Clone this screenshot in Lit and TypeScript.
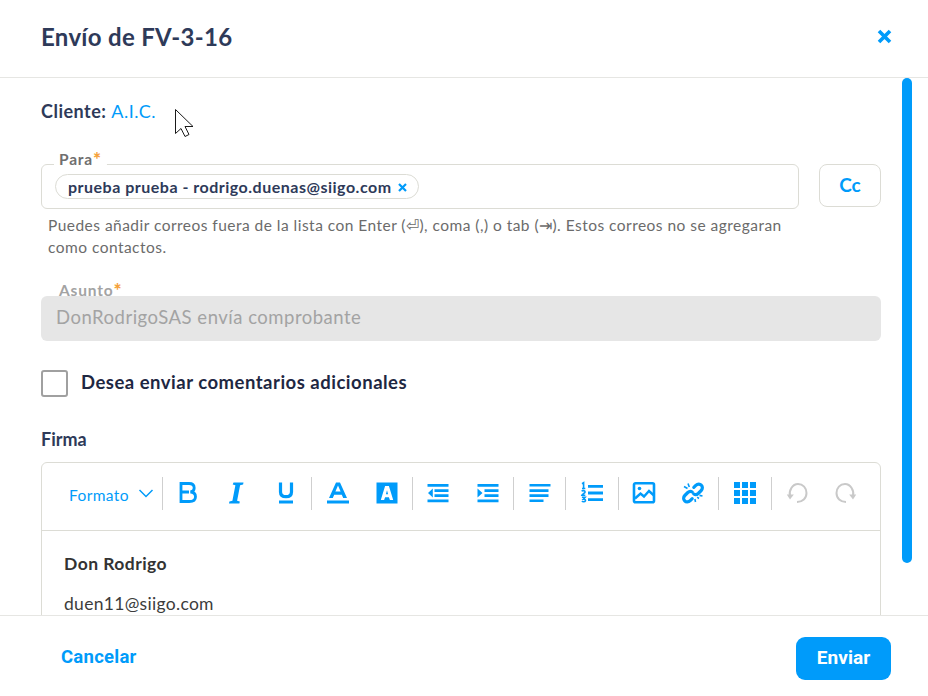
import { LitElement, html, css, svg } from "lit";
import { customElement } from "lit/decorators.js";

const ic = (body: unknown) => html`<svg class="ic" viewBox="0 0 24 24" width="24" height="24" fill="none">${body}</svg>`;

const icons = {
  bold: svg`<path d="M5 2.500h8c3.200 0 5.200 1.600 5.200 4.400 0 2.200-1.500 3.800-3.800 4.100 3 .2 5.100 2 5.100 4.700 0 2.900-2.300 4.800-6.200 4.800H5zM5 11h8" stroke="currentColor" stroke-width="2.800"/>`,
  italic: svg`<path d="M8.500 1.500h10l-.4 2-3 .8-3 15.400 2.700.7-.4 2.100H4l.4-2.100 3-.7 3-15.400-2.700-.8z" fill="currentColor"/>`,
  underline: svg`<path d="M6.500 1.500v9.500c0 3 2 4.700 5.500 4.700s5.500-1.700 5.500-4.700V1.500" stroke="currentColor" stroke-width="3.200"/><rect x="5" y="19.500" width="14" height="3" fill="currentColor"/>`,
  colorA: svg`<path d="M4 17 11 1.500h4L22 17h-3.800l-1.400-3.300H9.200L7.800 17zM10.400 10.500h5.200L13 4.500z" fill="currentColor" fill-rule="evenodd"/><rect x="2" y="19.500" width="22" height="3" fill="currentColor"/>`,
  bgA: svg`<path fill-rule="evenodd" fill="currentColor" d="M1.500 1.500h21v21h-21zM5.800 19h3.300l1-2.800h3.800l1 2.800h3.300L13.900 5H10.100zM10.900 13.300h2.200L12 9.200z"/>`,
  outdent: svg`<path fill="currentColor" d="M1.500 3h21v2.800h-21zM8.500 8.200h14V11h-14zM8.500 13.300h14v2.800h-14zM1.500 18.500h21v2.800h-21zM6.800 7.500v9L2 12z"/>`,
  indent: svg`<path fill="currentColor" d="M1.500 3h21v2.800h-21zM8.500 8.200h14V11h-14zM8.500 13.300h14v2.800h-14zM1.500 18.500h21v2.800h-21zM1.500 7.500v9L6.500 12z"/>`,
  left: svg`<path fill="currentColor" d="M1.500 3h21v2.600h-21zM1.500 8.300h19v2.600h-19zM1.500 13.300h19v2.600h-19zM1.500 18.500h14v2.600h-14z"/>`,
  list: svg`<path fill="currentColor" d="M8 4h15v2.800H8zM8 10.600h15v2.800H8zM8 17.200h15V20H8z"/><path stroke="currentColor" stroke-width="1.600" d="M2 2.800 3.600 1.800v5.700M2 7.500h3.300M1.800 10.300c.5-1 3.300-1 3.300.6 0 1.300-3 2-3.300 3.400h3.500M1.900 16.300h3.200l-1.700 1.900c2-.1 2.300 1 2 1.700-.5 1-2.700 1-3.500.2"/>`,
  image: svg`<rect x="2" y="2.300" width="20" height="19" rx="1.500" stroke="currentColor" stroke-width="2.600"/><circle cx="7.500" cy="7.500" r="1.800" fill="currentColor"/><path d="m3 17.500 5.500-5 3.500 3 5-5.500 5 4.500" stroke="currentColor" stroke-width="2.400"/>`,
  unlink: svg`<path stroke="currentColor" stroke-width="3.200" stroke-linecap="round" d="M12.800 6.300l2-2c1.800-1.800 4.300-1.500 5.500-.2 1.500 1.500 1.400 3.900-.1 5.400l-3 3c-1.400 1.300-3.100 1.400-4.400.5M11.200 17.700l-2 2c-1.800 1.800-4.300 1.500-5.500.2-1.500-1.500-1.400-3.900.1-5.400l3-3c1.400-1.300 3.100-1.400 4.400-.5"/><path stroke="currentColor" stroke-width="1.600" d="M7 2.500 8.300 6M3 5.500 6.500 7.500M18 17.500l-1.800-1.300M21.500 15l-3-.6M14.500 21l-.6-3"/>`,
  table: svg`<path fill="currentColor" d="M1 1h6v6H1zM9 1h6v6H9zM17 1h6v6h-6zM1 9h6v6H1zM9 9h6v6H9zM17 9h6v6h-6zM1 17h6v6H1zM9 17h6v6H9zM17 17h6v6h-6z"/>`,
  undo: svg`<path stroke="currentColor" stroke-width="2" d="M5 15.500C3.500 9.500 7.500 3 13 3c5 0 8.500 4 8.500 9 0 5.500-4 9-9.500 9"/><path fill="currentColor" d="M1.800 13.500h7l-3.800 5z"/>`,
  redo: svg`<path stroke="currentColor" stroke-width="2" d="M19 15.500C20.500 9.500 16.500 3 11 3 6 3 2.500 7 2.500 12c0 5.500 4 9 9.500 9"/><path fill="currentColor" d="M22.200 13.500h-7l3.800 5z"/>`,
};

@customElement("app-root")
export class AppRoot extends LitElement {
  static styles = css`
    :host { display: block; width: 928px; height: 696px; background: #fff; font-family: Lato, "Noto Sans", sans-serif; color: #2e3a59; position: relative; overflow: hidden; }
    .modal { display: flex; flex-direction: column; height: 696px; }
    .head { height: 77px; border-bottom: 1px solid #e6e6e3; display: flex; align-items: center; justify-content: space-between; padding: 0 36px 0 41px; flex: none; }
    h1 { margin: 0; font-size: 24px; font-weight: 700; line-height: 30px; color: #2e3a59; letter-spacing: .3px; position: relative; top: -2px; }
    .close { width: 15px; height: 15px; color: #009bfa; position: relative; top: -2px; display: block; }
    .body { height: 537px; flex: none; overflow: hidden; padding: 0 47px 0 41px; }
    .client { margin-top: 22px; font-size: 18px; line-height: 22px; font-weight: 700; letter-spacing: .5px; }
    .client a { color: #009bfa; font-weight: 400; }
    .para-row { display: flex; gap: 20px; margin-top: 42px; align-items: flex-start; }
    .field { position: relative; }
    .para { flex: 1; height: 45px; box-sizing: border-box; border: 1px solid #dcdcd5; border-radius: 6px; display: flex; align-items: center; padding-left: 13px; }
    .legend { position: absolute; left: 12px; top: -16px; font-size: 15.500px; line-height: 20px; font-weight: 700; letter-spacing: .8px; color: #6f6f6f; background: linear-gradient(#fff 0 0) bottom/100% 5px no-repeat; padding: 0 5px; }
    .legend b { color: #f5a23b; font-size: 19px; line-height: 14px; position: relative; top: 1px; }
    .chip { height: 25px; box-sizing: border-box; border: 1px solid #dcdcd5; border-radius: 13px; display: flex; align-items: center; padding: 0 11px 0 12px; gap: 6px; font-size: 16px; font-weight: 700; letter-spacing: .5px; color: #2e3a59; }
    .chip svg { width: 9px; height: 9px; color: #009bfa; margin-top: 2px; }
    .cc { width: 62px; height: 43px; box-sizing: border-box; border: 1px solid #dcdcd5; border-radius: 8px; display: flex; align-items: center; justify-content: center; color: #009bfa; font-size: 19px; font-weight: 700; padding-bottom: 2px; }
    .help { margin: 5px 0 0 7px; width: 745px; font-size: 15.500px; line-height: 22px; letter-spacing: .47px; color: #6b6b6b; }
    .asunto { margin-top: 38px; height: 45px; background: #e6e6e6; border-radius: 6px; display: flex; align-items: center; padding-left: 15px; font-size: 18.500px; letter-spacing: .5px; color: #a3a3a3; padding-bottom: 3px; box-sizing: border-box; }
    .asunto .legend { left: 13px; top: -16px; color: #a3a3a3; background: none; }
    .check { margin-top: 29px; display: flex; align-items: center; gap: 13px; font-size: 18.500px; font-weight: 700; letter-spacing: .5px; line-height: 23px; color: #1e2742; }
    .check > span:last-child { margin-top: -2px; }
    .box { width: 27px; height: 27px; box-sizing: border-box; border: 2px solid #a0a0a0; border-radius: 3px; }
    .firma { margin-top: 30px; font-size: 18px; line-height: 24px; font-weight: 700; }
    .editor { margin-top: 11px; height: 160px; border: 1px solid #dcdcd5; border-radius: 6px 6px 0 0; }
    .toolbar { height: 61px; padding-bottom: 6px; border-bottom: 1px solid #dcdcd5; display: flex; align-items: center; color: #009bfa; }
    .fmt { width: 120px; box-sizing: border-box; padding-left: 27px; display: flex; align-items: center; gap: 9px; font-size: 15.500px; letter-spacing: .4px; padding-top: 2px; }
    .fmt svg { width: 16px; height: 9px; margin-top: -3px; }
    .sep { width: 1px; height: 33px; background: #cfcfcf; flex: none; }
    .grp { display: flex; align-items: center; }
    .grp > span { flex: 1; display: flex; justify-content: center; }
    .ic { display: block; margin-top: -2px; }
    .g148 { width: 148px; } .g100 { width: 100px; } .g99 { width: 99px; } .g51 { width: 51px; } .g52 { width: 52px; }
    .dis { color: #c9c9c9; }
    .sign { padding: 21px 22px 0; font-size: 17.500px; line-height: 24px; color: #3c3c3c; }
    .sign strong { display: block; font-weight: 700; color: #333; letter-spacing: .45px; }
    .sign div { margin-top: 16px; letter-spacing: .3px; }
    .foot { flex: 1; border-top: 1px solid #e6e6e3; display: flex; align-items: center; justify-content: space-between; padding: 5px 37px 0 61px; font-family: Roboto, sans-serif; }
    .cancel { color: #009bfa; font-size: 18.500px; font-weight: 700; letter-spacing: .25px; margin-top: -3px; }
    .send { width: 95px; height: 43px; box-sizing: border-box; padding-bottom: 2px; background: #009bfa; color: #fff; border-radius: 9px; display: flex; align-items: center; justify-content: center; font-size: 19px; font-weight: 700; letter-spacing: .1px; }
    .thumb { position: absolute; left: 902px; top: 78px; width: 10px; height: 485px; background: #009bfa; border-radius: 5px; }
    .cursor { position: absolute; left: 175px; top: 109px; width: 19px; height: 28px; }
  `;

  render() {
    return html`
      <div class="modal">
        <header class="head">
          <h1>Envío de FV-3-16</h1>
          <svg class="close" viewBox="0 0 15 15"><path d="M2 2l11 11M13 2 2 13" stroke="currentColor" stroke-width="3.600"/></svg>
        </header>
        <main class="body">
          <div class="client">Cliente: <a>A.I.C.</a></div>
          <div class="para-row">
            <div class="field para">
              <span class="legend">Para<b>*</b></span>
              <span class="chip">prueba prueba - rodrigo.duenas@siigo.com
                <svg viewBox="0 0 9 9"><path d="M1 1l7 7M8 1 1 8" stroke="currentColor" stroke-width="2.200"/></svg>
              </span>
            </div>
            <div class="cc">Cc</div>
          </div>
          <p class="help">Puedes añadir correos fuera de la lista con Enter (⏎), coma (,) o tab (⇥). Estos correos no se agregaran como contactos.</p>
          <div class="field asunto"><span class="legend">Asunto<b>*</b></span>DonRodrigoSAS envía comprobante</div>
          <div class="check"><span class="box"></span><span>Desea enviar comentarios adicionales</span></div>
          <div class="firma">Firma</div>
          <div class="editor">
            <div class="toolbar">
              <div class="fmt">Formato <svg viewBox="0 0 16 9"><path d="M1.500 1 8 7.500 14.500 1" stroke="currentColor" stroke-width="1.500" fill="none"/></svg></div>
              <i class="sep"></i>
              <div class="grp g148"><span>${ic(icons.bold)}</span><span>${ic(icons.italic)}</span><span>${ic(icons.underline)}</span></div>
              <i class="sep"></i>
              <div class="grp g100"><span>${ic(icons.colorA)}</span><span>${ic(icons.bgA)}</span></div>
              <i class="sep"></i>
              <div class="grp g100"><span>${ic(icons.outdent)}</span><span>${ic(icons.indent)}</span></div>
              <i class="sep"></i>
              <div class="grp g51"><span>${ic(icons.left)}</span></div>
              <i class="sep"></i>
              <div class="grp g52"><span>${ic(icons.list)}</span></div>
              <i class="sep"></i>
              <div class="grp g99"><span>${ic(icons.image)}</span><span>${ic(icons.unlink)}</span></div>
              <i class="sep"></i>
              <div class="grp g52"><span>${ic(icons.table)}</span></div>
              <i class="sep"></i>
              <div class="grp g99 dis"><span>${ic(icons.undo)}</span><span>${ic(icons.redo)}</span></div>
            </div>
            <div class="sign"><strong>Don Rodrigo</strong><div>duen11@siigo.com</div></div>
          </div>
        </main>
        <footer class="foot">
          <span class="cancel">Cancelar</span>
          <span class="send">Enviar</span>
        </footer>
      </div>
      <div class="thumb"></div>
      <svg class="cursor" viewBox="0 0 19 28"><path d="M.5.5v24l5.500-5 4 8 4-2-4-8h8z" fill="#fff" stroke="#1a1a1a" stroke-width="1"/></svg>
    `;
  }
}
